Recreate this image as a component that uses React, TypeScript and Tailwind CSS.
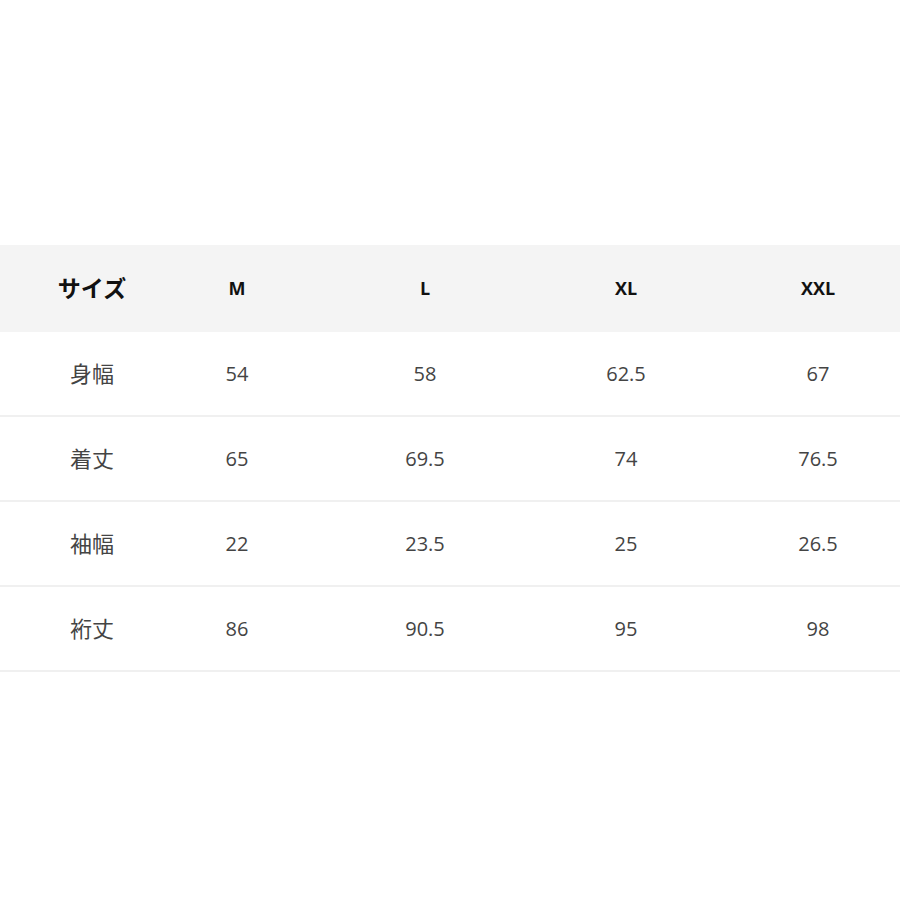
import React from 'react';

const sizes = ['M', 'L', 'XL', 'XXL'];

const rows: { label: string; values: string[] }[] = [
  { label: '身幅', values: ['54', '58', '62.5', '67'] },
  { label: '着丈', values: ['65', '69.5', '74', '76.5'] },
  { label: '袖幅', values: ['22', '23.5', '25', '26.5'] },
  { label: '裄丈', values: ['86', '90.5', '95', '98'] },
];

const font = { fontFamily: '"Open Sans", "Noto Sans CJK JP", sans-serif' };

const gridCols = 'grid grid-cols-[184px_106px_270px_132px_208px]';

export default function App() {
  return (
    <div className="w-[900px] h-[900px] bg-white pt-[245px]" style={font}>
      <div className={`${gridCols} h-[87px] bg-[#f4f4f4] items-center text-[#111] font-bold`}>
        <div className="text-center text-[23px]">サイズ</div>
        {sizes.map((s, i) => (
          <div key={s} className={i === 3 ? 'text-center text-[18px] pl-[44px]' : 'text-center text-[18px]'}>
            {s}
          </div>
        ))}
      </div>
      {rows.map(row => (
        <div key={row.label} className={`${gridCols} h-[85px] items-center border-b-2 border-[#f0f0f0] text-[#444]`}>
          <div className="text-center text-[22px]">{row.label}</div>
          {row.values.map((v, i) => (
            <div key={i} className={i === 3 ? 'text-center text-[20px] pl-[44px]' : 'text-center text-[20px]'}>
              {v}
            </div>
          ))}
        </div>
      ))}
    </div>
  );
}
